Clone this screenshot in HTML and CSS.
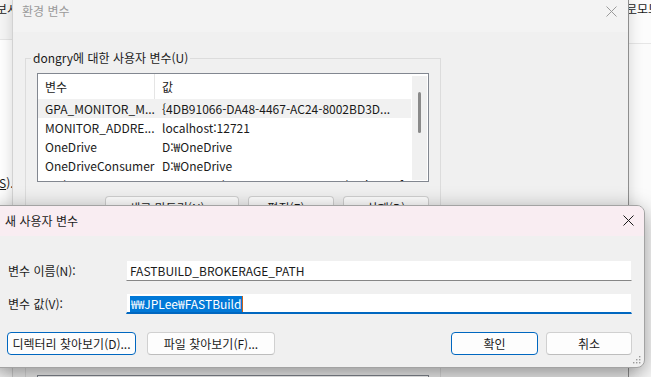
FILE: index.html
```html
<!DOCTYPE html>
<html lang="ko">
<head>
  <meta charset="UTF-8" />
  <meta name="viewport" content="width=device-width, initial-scale=1.0" />
  <title>새 사용자 변수</title>
  <link rel="stylesheet" href="styles.css">
</head>
<body>
  <div class="desk">
    <div class="side side-left">
      <div class="side-top"><span class="cut-text">보시</span></div>
      <div class="side-body"><span class="hotkey-text"><u>S</u>).</span></div>
    </div>

    <div class="env-dlg">
      <div class="env-title">
        <span>환경 변수</span>
        <svg class="close-icon" width="11" height="11" viewBox="0 0 11 11">
          <path d="M0.5 0.5 L10.5 10.5 M10.5 0.5 L0.5 10.5" stroke="#9a9a9a" stroke-width="1" fill="none" />
        </svg>
      </div>
      <div class="env-body">
        <fieldset class="group">
          <legend>dongry에 대한 사용자 변수(U)</legend>
          <div class="listbox">
            <div class="list-main">
              <div class="list-head"><span class="cell">변수</span><span class="cell">값</span></div>
              <div class="list-row is-selected"><span class="cell">GPA_MONITOR_M...</span><span class="cell">{4DB91066-DA48-4467-AC24-8002BD3D...</span></div>
              <div class="list-row"><span class="cell">MONITOR_ADDRE...</span><span class="cell">localhost:12721</span></div>
              <div class="list-row"><span class="cell">OneDrive</span><span class="cell">D:₩OneDrive</span></div>
              <div class="list-row"><span class="cell">OneDriveConsumer</span><span class="cell">D:₩OneDrive</span></div>
              <div class="list-row"><span class="cell">Path</span><span class="cell">C:₩Users₩dongry₩AppData₩Local₩Microsoft₩...</span></div>
            </div>
            <div class="scroll"><div class="scroll-thumb"></div></div>
          </div>
          <div class="group-actions">
            <button class="btn btn-wide">새로 만들기(N)...</button>
            <button class="btn">편집(E)...</button>
            <button class="btn">삭제(D)</button>
          </div>
        </fieldset>
        <fieldset class="group">
          <legend>시스템 변수(S)</legend>
          <div class="listbox listbox-system"></div>
        </fieldset>
      </div>
    </div>

    <div class="side side-right">
      <div class="side-top"><span class="cut-text">로모드</span></div>
    </div>
  </div>

  <div class="new-dlg">
    <div class="new-title">
      <span>새 사용자 변수</span>
      <svg class="close-icon" width="11" height="11" viewBox="0 0 11 11">
        <path d="M0.5 0.5 L10.5 10.5 M10.5 0.5 L0.5 10.5" stroke="#1a1a1a" stroke-width="1" fill="none" />
      </svg>
    </div>
    <div class="new-body">
      <div class="field-grid">
        <label class="field-label">변수 이름(N):</label>
        <div class="field-input">FASTBUILD_BROKERAGE_PATH</div>
        <label class="field-label">변수 값(V):</label>
        <div class="field-input is-focused"><span class="selection">₩₩JPLee₩FASTBuild</span><span class="caret"></span></div>
      </div>
      <div class="new-actions">
        <div class="btn-group">
          <button class="btn btn-browse is-default">디렉터리 찾아보기(D)...</button>
          <button class="btn btn-browse">파일 찾아보기(F)...</button>
        </div>
        <div class="btn-group btn-group-right">
          <button class="btn btn-dialog is-default">확인</button>
          <button class="btn btn-dialog">취소</button>
        </div>
      </div>
    </div>
    <svg class="grip" width="9" height="9" viewBox="0 0 9 9">
      <rect x="7" y="1" width="1.4" height="1.4" fill="#9a9a9a" />
      <rect x="4" y="4" width="1.4" height="1.4" fill="#9a9a9a" />
      <rect x="7" y="4" width="1.4" height="1.4" fill="#9a9a9a" />
      <rect x="1" y="7" width="1.4" height="1.4" fill="#9a9a9a" />
      <rect x="4" y="7" width="1.4" height="1.4" fill="#9a9a9a" />
      <rect x="7" y="7" width="1.4" height="1.4" fill="#9a9a9a" />
    </svg>
  </div>
</body>
</html>
```

FILE: styles.css
```css
* {
  box-sizing: border-box;
}
body {
  margin: 0;
  width: 651px;
  height: 377px;
  overflow: hidden;
  position: relative;
  background: #fff;
  color: #1a1a1a;
  font-family: "Noto Sans CJK KR", "Noto Sans", sans-serif;
  font-size: 12px;
}
button {
  font-family: inherit;
  font-size: 12px;
  color: #1a1a1a;
}
.desk {
  display: flex;
  height: 377px;
  overflow: hidden;
}

/* windows behind */
.side {
  overflow: hidden;
  background: #fff;
}
.side-left {
  width: 12px;
  flex-shrink: 0;
}
.side-right {
  flex: 1;
  background: #fbfbfb;
}
.side-top {
  height: 40px;
  background: #f6f6f6;
  border-bottom: 1px solid #e6e6e6;
  white-space: nowrap;
  line-height: 16px;
  padding-top: 1px;
}
.side-right .side-top {
  height: 44px;
  background: #fcfcfc;
}
.cut-text {
  display: inline-block;
  margin-left: -4px;
}
.side-right .cut-text {
  margin-left: -3px;
}
.side-body {
  padding-top: 135px;
  line-height: 16px;
  white-space: nowrap;
}
.hotkey-text {
  display: inline-block;
  margin-left: -1px;
}

/* 환경 변수 dialog */
.env-dlg {
  width: 617px;
  flex-shrink: 0;
  overflow: hidden;
  background: #f0f0f0;
  border-left: 1px solid #d2d2d2;
  border-right: 1px solid #8e8e8e;
  position: relative;
  z-index: 1;
  box-shadow: 0 0 14px rgba(0, 0, 0, 0.16);
}
.env-title {
  height: 32px;
  display: flex;
  justify-content: space-between;
  align-items: flex-start;
  padding: 3px 11px 0 9px;
  line-height: 16px;
  color: #9a9a9a;
  background: #f3f3f3;
}
.env-title .close-icon {
  margin-top: 3px;
}
.env-body {
  display: flex;
  flex-direction: column;
}
.group {
  width: 416px;
  min-width: 0;
  margin: 18px 0 0 12px;
  padding: 0 11px 10px;
  border: 1px solid #dcdcdc;
}
.group legend {
  padding: 0 2px;
  margin-left: -6px;
  line-height: 16px;
}
.listbox {
  height: 109px;
  margin-top: 7px;
  display: flex;
  overflow: hidden;
  background: #fff;
  border: 1px solid #828790;
}
.listbox-system {
  margin-top: 111px;
}
.list-main {
  flex: 1;
}
.list-head,
.list-row {
  display: grid;
  grid-template-columns: 117px 1fr;
  white-space: nowrap;
}
.list-head {
  height: 25px;
  line-height: 25px;
}
.list-head .cell:first-child {
  border-right: 1px solid #e5e5e5;
}
.list-row {
  height: 19px;
  line-height: 19px;
}
.list-row.is-selected {
  background: #f1f1f1;
}
.cell {
  padding-left: 7px;
  overflow: hidden;
}
.scroll {
  width: 17px;
  background: #f0f0f0;
  border: 1px solid #fff;
  border-top-width: 2px;
}
.scroll-thumb {
  width: 3px;
  height: 41px;
  margin: 16px auto 0;
  background: #8a8a8a;
  border-radius: 2px;
}
.group-actions {
  display: flex;
  justify-content: flex-end;
  gap: 9px;
  margin-top: 14px;
}

/* buttons */
.btn {
  height: 23px;
  width: 86px;
  padding: 0;
  background: #fdfdfd;
  border: 1px solid #d0d0d0;
  border-bottom-color: #bdbdbd;
  border-radius: 4px;
  white-space: nowrap;
}
.btn-wide {
  width: 134px;
}
.btn.is-default {
  border: 1px solid #0067c0;
}

/* 새 사용자 변수 dialog */
.new-dlg {
  position: absolute;
  left: -10px;
  top: 205px;
  width: 655px;
  height: 163px;
  z-index: 2;
  display: flex;
  flex-direction: column;
  background: #f0f0f0;
  border: 1px solid #a3a3a3;
  border-radius: 0 8px 8px 0;
  overflow: hidden;
  box-shadow: 0 6px 22px rgba(0, 0, 0, 0.4);
}
.new-title {
  height: 30px;
  flex-shrink: 0;
  display: flex;
  justify-content: space-between;
  align-items: center;
  padding: 0 10px 2px 14px;
  background: #f9edf2;
}
.new-body {
  padding: 24px 12px 0 17px;
}
.field-grid {
  display: grid;
  grid-template-columns: 118px 1fr;
  row-gap: 12px;
  align-items: center;
}
.field-label {
  line-height: 16px;
}
.field-input {
  height: 21px;
  display: flex;
  align-items: center;
  padding-left: 3px;
  background: #fff;
  border: 1px solid #f0f0f0;
  border-bottom: 1px solid #868686;
  white-space: nowrap;
}
.field-input.is-focused {
  border-bottom: 2px solid #0067c0;
  padding-top: 1px;
}
.selection {
  background: #0078d7;
  color: #fff;
  line-height: 16px;
  padding: 0 1px;
}
.caret {
  width: 1px;
  height: 16px;
  background: #c8641e;
}
.new-actions {
  display: flex;
  justify-content: space-between;
  margin: 18px 0 0 -1px;
}
.btn-group {
  display: flex;
  gap: 11px;
}
.btn-group-right {
  gap: 8px;
}
.btn-browse {
  width: 129px;
}
.btn-browse + .btn-browse {
  width: 128px;
}
.btn-dialog {
  width: 87px;
}
.btn-dialog + .btn-dialog {
  width: 86px;
}
.grip {
  position: absolute;
  right: 3px;
  bottom: 3px;
}
```
